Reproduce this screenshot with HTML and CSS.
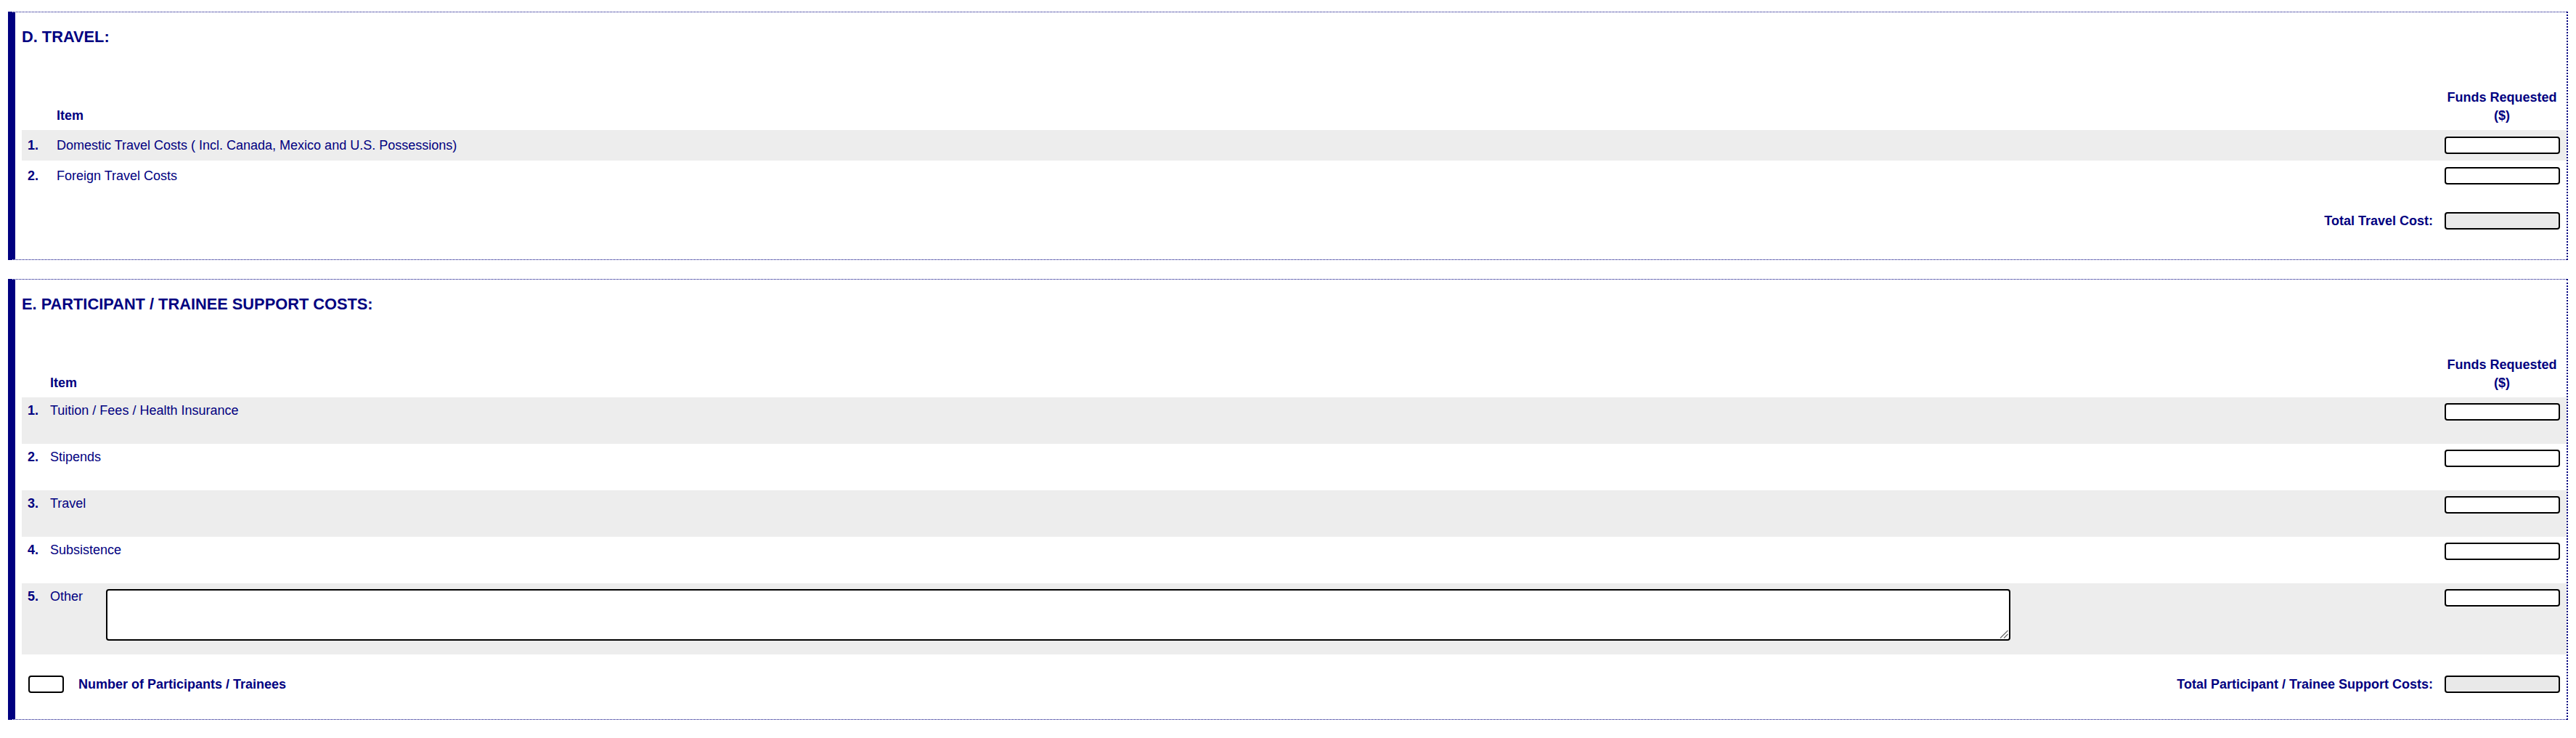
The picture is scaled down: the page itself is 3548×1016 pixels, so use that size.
FILE: index.html
```html
<!DOCTYPE html>
<html lang="en">
<head>
<meta charset="utf-8">
<title>Budget — Travel and Participant Support</title>
<link rel="stylesheet" href="styles.css">
</head>
<body>
  <section class="sec sec-travel">
    <h2 class="sec-title">D. TRAVEL:</h2>
    <div class="grid grid-d">
      <div class="row head">
        <div class="c-num"></div>
        <div class="c-item">Item</div>
        <div class="c-funds">Funds Requested<br>($)</div>
      </div>
      <div class="row row-d shaded">
        <div class="c-num">1.</div>
        <div class="c-item">Domestic Travel Costs ( Incl. Canada, Mexico and U.S. Possessions)</div>
        <div class="c-funds"><input class="amt" type="text"></div>
      </div>
      <div class="row row-d">
        <div class="c-num">2.</div>
        <div class="c-item">Foreign Travel Costs</div>
        <div class="c-funds"><input class="amt" type="text"></div>
      </div>
    </div>
    <div class="foot">
      <div class="foot-left"></div>
      <div class="foot-right">
        <span class="total-label">Total Travel Cost:</span>
        <input class="amt total" type="text" readonly>
      </div>
    </div>
  </section>

  <section class="sec sec-support">
    <h2 class="sec-title">E. PARTICIPANT / TRAINEE SUPPORT COSTS:</h2>
    <div class="grid grid-e">
      <div class="row head">
        <div class="c-num"></div>
        <div class="c-item">Item</div>
        <div class="c-funds">Funds Requested<br>($)</div>
      </div>
      <div class="row row-e shaded">
        <div class="c-num">1.</div>
        <div class="c-item">Tuition / Fees / Health Insurance</div>
        <div class="c-funds"><input class="amt" type="text"></div>
      </div>
      <div class="row row-e">
        <div class="c-num">2.</div>
        <div class="c-item">Stipends</div>
        <div class="c-funds"><input class="amt" type="text"></div>
      </div>
      <div class="row row-e shaded">
        <div class="c-num">3.</div>
        <div class="c-item">Travel</div>
        <div class="c-funds"><input class="amt" type="text"></div>
      </div>
      <div class="row row-e">
        <div class="c-num">4.</div>
        <div class="c-item">Subsistence</div>
        <div class="c-funds"><input class="amt" type="text"></div>
      </div>
      <div class="row row-e row-other shaded">
        <div class="c-num">5.</div>
        <div class="c-item other">
          <span class="other-label">Other</span>
          <span class="other-wrap">
            <textarea class="other-text"></textarea>
            <svg class="grip" width="12" height="12" viewBox="0 0 12 12" aria-hidden="true">
              <path d="M1 11.5 L11.5 1 M6 11.5 L11.5 6" stroke="#6f6f6f" stroke-width="1.4" fill="none"/>
            </svg>
          </span>
        </div>
        <div class="c-funds"><input class="amt" type="text"></div>
      </div>
    </div>
    <div class="foot">
      <div class="foot-left">
        <input class="count" type="text">
        <span class="count-label">Number of Participants / Trainees</span>
      </div>
      <div class="foot-right">
        <span class="total-label">Total Participant / Trainee Support Costs:</span>
        <input class="amt total" type="text" readonly>
      </div>
    </div>
  </section>
</body>
</html>
```

FILE: styles.css
```css
html, body {
  margin: 0;
  background: #ffffff;
}

body {
  padding: 16px 11px 0 11px;
  font-family: "Liberation Sans", Arial, Helvetica, sans-serif;
  font-size: 18px;
  color: #000080;
}

.sec {
  border: 1px dotted #000080;
  border-right-width: 2px;
  border-left: 10px solid #000080;
  padding: 0 0 32px 9px;
}

.sec + .sec {
  margin-top: 26px;
}

.sec-support {
  padding-bottom: 27px;
}

.sec-title {
  margin: 22px 0 59px 0;
  font-size: 21.8px;
  font-weight: bold;
  line-height: 24px;
}

.grid-d {
  --num-w: 48px;
}

.grid-e {
  --num-w: 39px;
}

.row {
  display: grid;
  grid-template-columns: var(--num-w) 1fr 179px;
}

.row.head {
  align-items: end;
  font-weight: bold;
  line-height: 25px;
  padding-bottom: 7px;
}

.shaded {
  background: #ededed;
}

.c-num {
  padding-left: 8px;
  font-weight: bold;
}

.c-funds {
  display: flex;
  justify-content: center;
  padding: 0 9px 0 10px;
  text-align: center;
  white-space: nowrap;
}

.row-d {
  height: 42px;
  align-items: center;
}

.row-e {
  height: 64px;
  align-items: start;
  padding-top: 8px;
  box-sizing: border-box;
}

.row-e.row-other {
  height: 98px;
}

.amt {
  box-sizing: border-box;
  width: 159px;
  height: 24px;
  margin: 0;
  border: 2px solid #000000;
  border-radius: 4px;
  background: #ffffff;
  font: inherit;
  font-size: 14px;
  padding: 0 4px;
}

.amt.total {
  background: #e9e9e9;
}

.other {
  display: flex;
  align-items: flex-start;
}

.other-label {
  width: 77px;
  flex: none;
}

.other-wrap {
  position: relative;
  display: block;
  width: 2623px;
  height: 71px;
  flex: none;
}

.other-text {
  display: block;
  box-sizing: border-box;
  width: 100%;
  height: 100%;
  margin: 0;
  border: 2px solid #000000;
  border-radius: 4px;
  background: #ffffff;
  font: inherit;
  resize: none;
}

.grip {
  position: absolute;
  right: 3px;
  bottom: 3px;
  pointer-events: none;
}

.foot {
  display: flex;
  justify-content: space-between;
  align-items: center;
  height: 42px;
  margin-top: 20px;
  font-weight: bold;
}

.foot-left {
  display: flex;
  align-items: center;
  gap: 20px;
  padding-left: 9px;
}

.foot-right {
  display: flex;
  align-items: center;
  gap: 16px;
  padding-right: 9px;
}

.count {
  box-sizing: border-box;
  width: 49px;
  height: 24px;
  margin: 0;
  border: 2px solid #000000;
  border-radius: 4px;
  background: #ffffff;
}
```
